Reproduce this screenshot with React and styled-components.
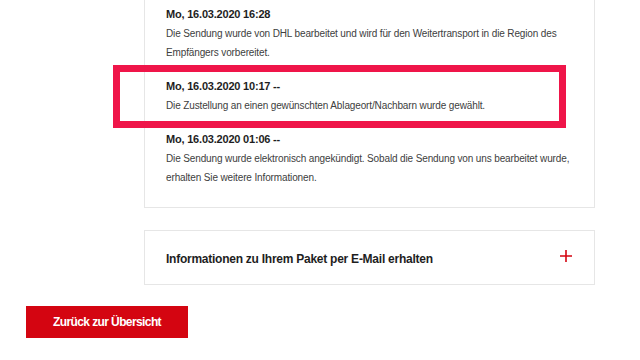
import React from 'react';
import styled, { createGlobalStyle } from 'styled-components';

const GlobalStyle = createGlobalStyle`
  html, body {
    margin: 0;
    padding: 0;
    background: #fff;
    overflow: hidden;
  }
  body {
    font-family: "Liberation Sans", Arial, sans-serif;
    color: #333;
  }
`;

const events = [
  {
    date: 'Mo, 16.03.2020 16:28',
    text: 'Die Sendung wurde von DHL bearbeitet und wird für den Weitertransport in die Region des Empfängers vorbereitet.',
  },
  {
    date: 'Mo, 16.03.2020 10:17 --',
    text: 'Die Zustellung an einen gewünschten Ablageort/Nachbarn wurde gewählt.',
    marked: true,
  },
  {
    date: 'Mo, 16.03.2020 01:06 --',
    text: 'Die Sendung wurde elektronisch angekündigt. Sobald die Sendung von uns bearbeitet wurde, erhalten Sie weitere Informationen.',
  },
];

export default function App() {
  return (
    <>
      <GlobalStyle />
      <Page>
        <Timeline>
          {events.map((ev) => (
            <Event key={ev.date}>
              <EventDate>{ev.date}</EventDate>
              <EventText>{ev.text}</EventText>
              {ev.marked && <Marker />}
            </Event>
          ))}
        </Timeline>

        <Accordion>
          <AccordionTitle>Informationen zu Ihrem Paket per E-Mail erhalten</AccordionTitle>
          <PlusIcon viewBox="0 0 14 14">
            <path d="M7 1v12M1 7h12" stroke="#d40511" strokeWidth="1.6" fill="none" />
          </PlusIcon>
        </Accordion>

        <BackButton type="button">Zurück zur Übersicht</BackButton>
      </Page>
    </>
  );
}

const Page = styled.div`
  display: flex;
  flex-direction: column;
  align-items: flex-start;
  padding: 0 26px;
  margin-top: -20px;
`;

const Timeline = styled.div`
  margin-left: 118px;
  width: 451px;
  box-sizing: border-box;
  border: 1px solid #e6e6e6;
  padding: 24px 20px 20px 21px;
  display: flex;
  flex-direction: column;
  gap: 15px;
`;

const Event = styled.div`
  position: relative;
`;

const EventDate = styled.div`
  font-size: 11px;
  font-weight: 700;
  line-height: 19px;
  letter-spacing: -0.2px;
  color: #1e1e1e;
`;

const EventText = styled.div`
  font-size: 10px;
  line-height: 19px;
  letter-spacing: -0.13px;
  color: #404040;
`;

const Marker = styled.div`
  position: absolute;
  top: -12px;
  bottom: -13px;
  left: -53px;
  right: 8px;
  border: 7px solid #ef1549;
  pointer-events: none;
`;

const Accordion = styled.div`
  margin: 22px 0 0 118px;
  width: 451px;
  height: 55px;
  box-sizing: border-box;
  border: 1px solid #e6e6e6;
  padding: 0 22px 0 21px;
  display: flex;
  align-items: center;
  justify-content: space-between;
`;

const AccordionTitle = styled.div`
  font-size: 12px;
  font-weight: 700;
  letter-spacing: -0.25px;
  color: #1e1e1e;
  padding-top: 2px;
`;

const PlusIcon = styled.svg`
  width: 14px;
  height: 14px;
  margin-right: -1px;
  margin-bottom: 4px;
`;

const BackButton = styled.button`
  margin-top: 21px;
  width: 162px;
  height: 32px;
  border: none;
  background: #d40511;
  color: #fff;
  font-family: "Liberation Sans", Arial, sans-serif;
  font-size: 12px;
  font-weight: 700;
  letter-spacing: -0.6px;
  cursor: pointer;
`;
